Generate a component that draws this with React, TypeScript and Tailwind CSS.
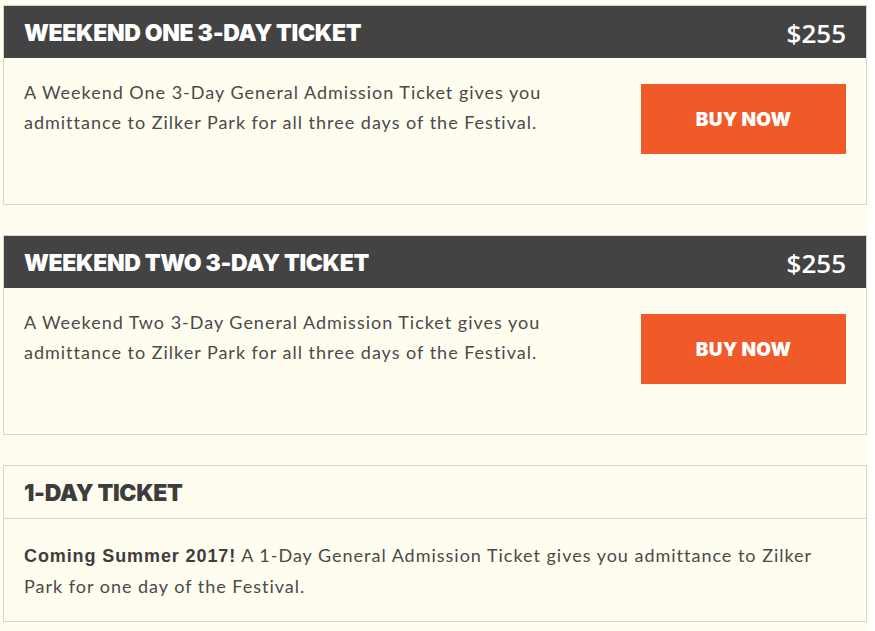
function TicketCard({ title, price, text }: { title: string; price: string; text: string }) {
  return (
    <div className="border border-[#d8d6cc] bg-[#fffdf0]">
      <div className="h-[52px] bg-[#434343] flex items-center justify-between px-5 pt-[3px] text-white">
        <h2 className="font-['Inter','Liberation_Sans',sans-serif] text-[23px] font-black uppercase tracking-[-0.015em]">{title}</h2>
        <span className="font-['Open_Sans',sans-serif] text-[26px] font-semibold">{price}</span>
      </div>
      <div className="h-[146px] flex justify-between px-5">
        <p className="pt-[19px] w-[560px] font-['Lato','Open_Sans',sans-serif] text-[18px] leading-[30px] tracking-[0.055em] text-[#4a4a4a]">
          {text}
        </p>
        <button className="mt-[26px] w-[205px] h-[70px] pt-[3px] bg-[#f05a28] text-white font-['Inter','Liberation_Sans',sans-serif] text-[19px] font-black uppercase tracking-[0.01em]">
          Buy Now
        </button>
      </div>
    </div>
  )
}

export default function App() {
  return (
    <div className="min-h-screen bg-[#fffdf0] pt-[5px] pl-[3px] w-[867px] flex flex-col gap-[30px]">
      <TicketCard
        title="Weekend One 3-Day Ticket"
        price="$255"
        text="A Weekend One 3-Day General Admission Ticket gives you admittance to Zilker Park for all three days of the Festival."
      />
      <TicketCard
        title="Weekend Two 3-Day Ticket"
        price="$255"
        text="A Weekend Two 3-Day General Admission Ticket gives you admittance to Zilker Park for all three days of the Festival."
      />

      {/* 1-day ticket: no price, no button */}
      <div className="border border-[#d8d6cc] bg-[#fffdf0]">
        <div className="h-[53px] border-b border-[#d8d6cc] flex items-center px-5 pt-[3px]">
          <h2 className="font-['Inter','Liberation_Sans',sans-serif] text-[23px] font-black uppercase tracking-[-0.015em] text-[#3d3d3d]">
            1-Day Ticket
          </h2>
        </div>
        <p className="px-5 pt-[21px] pb-[20px] max-w-[830px] font-['Lato','Open_Sans',sans-serif] text-[18px] leading-[30px] tracking-[0.055em] text-[#4a4a4a]">
          <strong className="font-['Liberation_Sans',Arial,sans-serif] font-bold tracking-[0.05em] text-[#3d3d3d]">Coming Summer 2017!</strong>{' '}
          A 1-Day General Admission Ticket gives you admittance to Zilker Park for one day of the Festival.
        </p>
      </div>
    </div>
  )
}
